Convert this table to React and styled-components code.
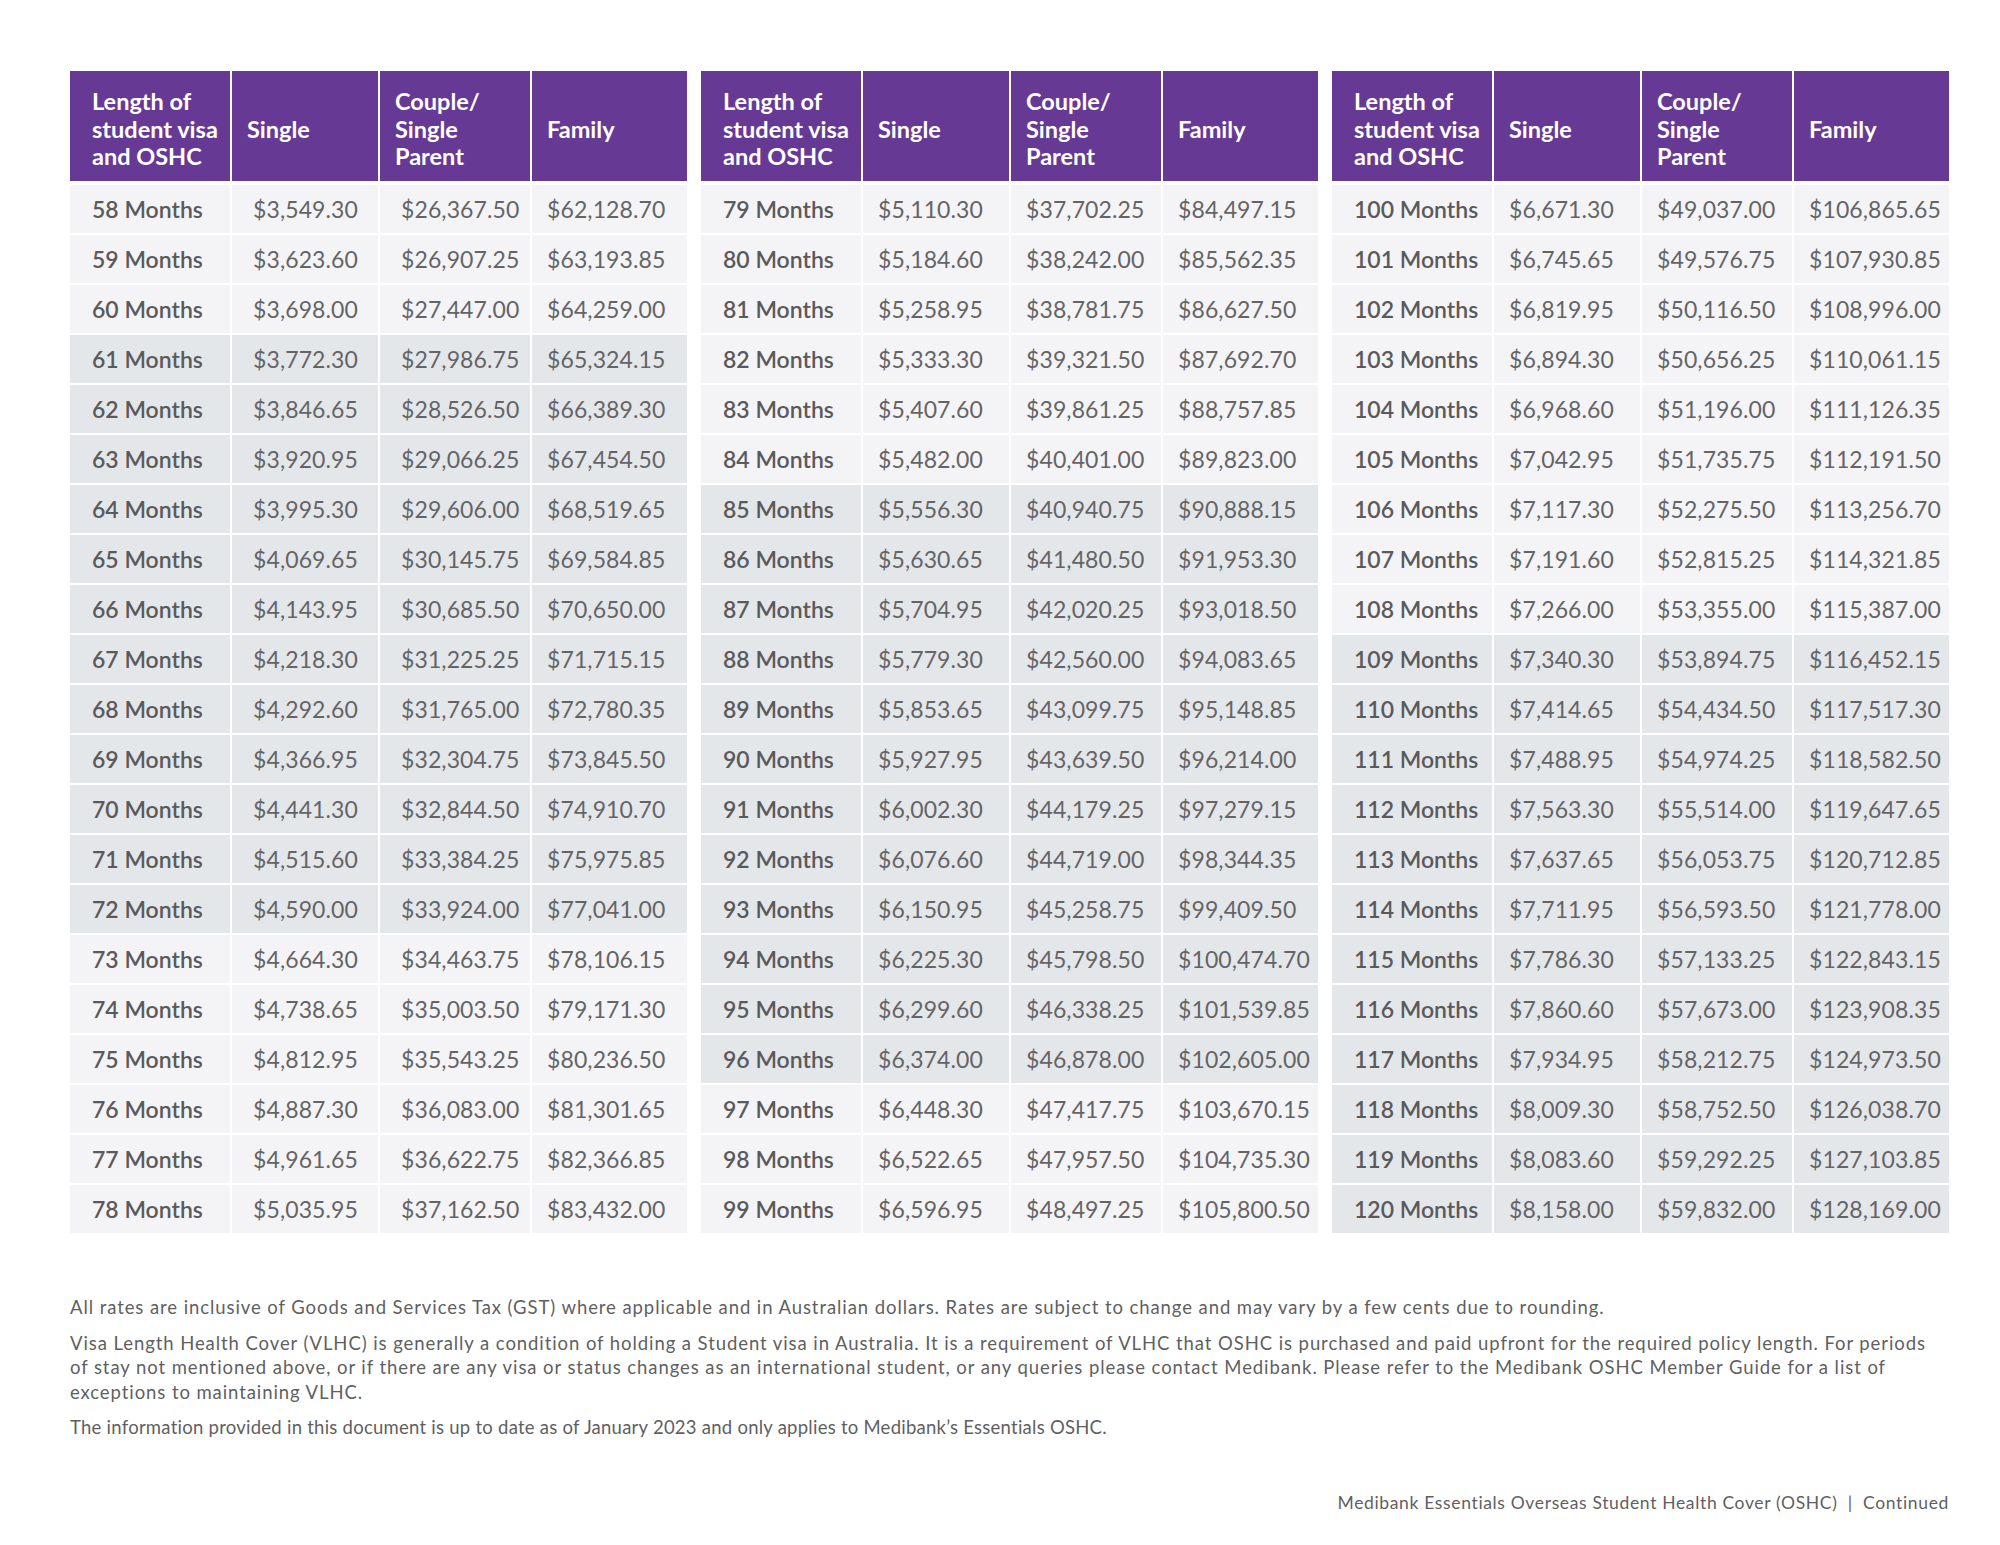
import React from "react";
import styled, { createGlobalStyle } from "styled-components";

const GlobalStyle = createGlobalStyle`
  body {
    margin: 0;
    background: #ffffff;
    font-family: "Lato", "Liberation Sans", sans-serif;
  }
`;

const Page = styled.div`
  width: 2000px;
  height: 1545px;
  box-sizing: border-box;
  padding: 71px 51px 0 70px;
  display: flex;
  flex-direction: column;
`;

const Tables = styled.div`
  display: flex;
  gap: 14px;
`;

const Grid = styled.div`
  display: grid;
  width: 617px;
  grid-template-columns: 160px 146px 150px 155px;
  grid-template-rows: 112px repeat(21, 48px);
  column-gap: 2px;
  row-gap: 2px;

  & > div:nth-child(-n + 4) {
    margin-bottom: 2px;
  }
`;

const HeadCell = styled.div`
  background: #663a94;
  color: #ffffff;
  font-weight: 700;
  font-size: 23.5px;
  line-height: 27.5px;
  display: flex;
  align-items: center;
  padding-top: 7px;
  padding-left: ${(p) => (p.first ? "22px" : "15px")};
`;

const Cell = styled.div`
  background: ${(p) => (p.dark ? "#e4e7ea" : "#f4f4f6")};
  color: ${(p) => (p.first ? "#5a5a5c" : "#646466")};
  font-weight: ${(p) => (p.first ? 600 : 400)};
  font-size: 23px;
  letter-spacing: ${(p) => (p.first ? "0" : "0.1px")};
  display: flex;
  align-items: center;
  padding-left: ${(p) => p.pad}px;
  white-space: nowrap;
`;

const Notes = styled.div`
  margin-top: 62px;
  display: flex;
  flex-direction: column;
  gap: 11px;
  color: #5f5f61;
  font-size: 18.5px;
  line-height: 24.5px;
`;

const Note = styled.p`
  margin: 0;
  white-space: nowrap;
  letter-spacing: ${(p) => (p.tight ? "0.25px" : "0.92px")};
`;

const Footer = styled.div`
  margin-top: auto;
  margin-bottom: 30px;
  text-align: right;
  color: #5f5f61;
  font-size: 17.5px;
  letter-spacing: 0.65px;
  line-height: 24px;
  white-space: pre;
`;

const raw = [
  `58|3,549.30|26,367.50|62,128.70
59|3,623.60|26,907.25|63,193.85
60|3,698.00|27,447.00|64,259.00
61|3,772.30|27,986.75|65,324.15
62|3,846.65|28,526.50|66,389.30
63|3,920.95|29,066.25|67,454.50
64|3,995.30|29,606.00|68,519.65
65|4,069.65|30,145.75|69,584.85
66|4,143.95|30,685.50|70,650.00
67|4,218.30|31,225.25|71,715.15
68|4,292.60|31,765.00|72,780.35
69|4,366.95|32,304.75|73,845.50
70|4,441.30|32,844.50|74,910.70
71|4,515.60|33,384.25|75,975.85
72|4,590.00|33,924.00|77,041.00
73|4,664.30|34,463.75|78,106.15
74|4,738.65|35,003.50|79,171.30
75|4,812.95|35,543.25|80,236.50
76|4,887.30|36,083.00|81,301.65
77|4,961.65|36,622.75|82,366.85
78|5,035.95|37,162.50|83,432.00`,
  `79|5,110.30|37,702.25|84,497.15
80|5,184.60|38,242.00|85,562.35
81|5,258.95|38,781.75|86,627.50
82|5,333.30|39,321.50|87,692.70
83|5,407.60|39,861.25|88,757.85
84|5,482.00|40,401.00|89,823.00
85|5,556.30|40,940.75|90,888.15
86|5,630.65|41,480.50|91,953.30
87|5,704.95|42,020.25|93,018.50
88|5,779.30|42,560.00|94,083.65
89|5,853.65|43,099.75|95,148.85
90|5,927.95|43,639.50|96,214.00
91|6,002.30|44,179.25|97,279.15
92|6,076.60|44,719.00|98,344.35
93|6,150.95|45,258.75|99,409.50
94|6,225.30|45,798.50|100,474.70
95|6,299.60|46,338.25|101,539.85
96|6,374.00|46,878.00|102,605.00
97|6,448.30|47,417.75|103,670.15
98|6,522.65|47,957.50|104,735.30
99|6,596.95|48,497.25|105,800.50`,
  `100|6,671.30|49,037.00|106,865.65
101|6,745.65|49,576.75|107,930.85
102|6,819.95|50,116.50|108,996.00
103|6,894.30|50,656.25|110,061.15
104|6,968.60|51,196.00|111,126.35
105|7,042.95|51,735.75|112,191.50
106|7,117.30|52,275.50|113,256.70
107|7,191.60|52,815.25|114,321.85
108|7,266.00|53,355.00|115,387.00
109|7,340.30|53,894.75|116,452.15
110|7,414.65|54,434.50|117,517.30
111|7,488.95|54,974.25|118,582.50
112|7,563.30|55,514.00|119,647.65
113|7,637.65|56,053.75|120,712.85
114|7,711.95|56,593.50|121,778.00
115|7,786.30|57,133.25|122,843.15
116|7,860.60|57,673.00|123,908.35
117|7,934.95|58,212.75|124,973.50
118|8,009.30|58,752.50|126,038.70
119|8,083.60|59,292.25|127,103.85
120|8,158.00|59,832.00|128,169.00`,
];

const tables = raw.map((block) =>
  block.split("\n").map((line) => {
    const [m, s, c, f] = line.split("|");
    return { months: Number(m), values: [s, c, f] };
  })
);

// rows are shaded by policy year (every 12 months)
const isDark = (m) => Math.floor((m - 1) / 12) % 2 === 1;

const RateTable = ({ rows, indent }) => {
  const pads = indent ? [21, 21, 15] : [15, 15, 15];
  return (
    <Grid>
      <HeadCell first>
        <span>
          Length of
          <br />
          student visa
          <br />
          and OSHC
        </span>
      </HeadCell>
      <HeadCell>Single</HeadCell>
      <HeadCell>
        <span>
          Couple/
          <br />
          Single
          <br />
          Parent
        </span>
      </HeadCell>
      <HeadCell>Family</HeadCell>
      {rows.map((r) => (
        <React.Fragment key={r.months}>
          <Cell first pad={22} dark={isDark(r.months)}>
            {r.months} Months
          </Cell>
          {r.values.map((v, i) => (
            <Cell key={i} pad={pads[i]} dark={isDark(r.months)}>
              ${v}
            </Cell>
          ))}
        </React.Fragment>
      ))}
    </Grid>
  );
};

export default function App() {
  return (
    <>
      <GlobalStyle />
      <Page>
        <Tables>
          {tables.map((rows, i) => (
            <RateTable key={i} rows={rows} indent={i === 0} />
          ))}
        </Tables>
        <Notes>
          <Note>
            All rates are inclusive of Goods and Services Tax (GST) where applicable and in Australian dollars. Rates are subject to change and may vary by a few cents due to rounding.
          </Note>
          <Note>
            Visa Length Health Cover (VLHC) is generally a condition of holding a Student visa in Australia. It is a requirement of VLHC that OSHC is purchased and paid upfront for the required policy length. For periods
            <br />
            of stay not mentioned above, or if there are any visa or status changes as an international student, or any queries please contact Medibank. Please refer to the Medibank OSHC Member Guide for a list of
            <br />
            exceptions to maintaining VLHC.
          </Note>
          <Note tight>
            The information provided in this document is up to date as of January 2023 and only applies to Medibank’s Essentials OSHC.
          </Note>
        </Notes>
        <Footer>{"Medibank Essentials Overseas Student Health Cover (OSHC)  |  Continued"}</Footer>
      </Page>
    </>
  );
}
